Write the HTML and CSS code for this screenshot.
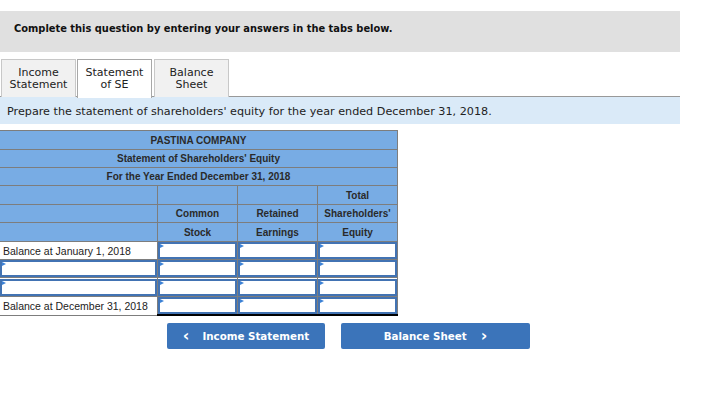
FILE: index.html
```html
<!DOCTYPE html>
<html>
<head>
<meta charset="utf-8">
<link rel="stylesheet" href="styles.css">
</head>
<body>
<div class="prompt">Complete this question by entering your answers in the tabs below.</div>
<div class="tabs">
  <div class="tab">Income<br>Statement</div>
  <div class="tab active">Statement<br>of SE</div>
  <div class="tab">Balance<br>Sheet</div>
</div>
<div class="instr">Prepare the statement of shareholders' equity for the year ended December 31, 2018.</div>
<table class="sheet">
  <colgroup><col class="c1"><col class="cn"><col class="cn"><col class="cn"></colgroup>
  <tr class="h19"><th colspan="4">PASTINA COMPANY</th></tr>
  <tr class="h18"><th colspan="4">Statement of Shareholders' Equity</th></tr>
  <tr class="h18"><th colspan="4">For the Year Ended December 31, 2018</th></tr>
  <tr class="h19"><th></th><th></th><th></th><th>Total</th></tr>
  <tr class="h18"><th></th><th>Common</th><th>Retained</th><th>Shareholders'</th></tr>
  <tr class="h19"><th></th><th>Stock</th><th>Earnings</th><th>Equity</th></tr>
  <tr class="h18">
    <td class="label">Balance at January 1, 2018</td>
    <td><div class="inp"></div></td><td><div class="inp"></div></td><td><div class="inp"></div></td>
  </tr>
  <tr class="h18">
    <td><div class="inp"></div></td>
    <td><div class="inp"></div></td><td><div class="inp"></div></td><td><div class="inp"></div></td>
  </tr>
  <tr class="h19">
    <td><div class="inp"></div></td>
    <td><div class="inp"></div></td><td><div class="inp"></div></td><td><div class="inp"></div></td>
  </tr>
  <tr class="h18 total">
    <td class="label">Balance at December 31, 2018</td>
    <td><div class="inp"></div></td><td><div class="inp"></div></td><td><div class="inp"></div></td>
  </tr>
</table>
<div class="nav">
  <button class="btn prev"><span class="chev">&lsaquo;</span>Income Statement</button>
  <button class="btn next">Balance Sheet<span class="chev">&rsaquo;</span></button>
</div>
</body>
</html>
```
FILE: styles.css
```css
body {
  margin: 0;
  width: 726px;
  height: 401px;
  background: #fff;
  font-family: "DejaVu Sans", Verdana, sans-serif;
  color: #111;
}
.prompt {
  margin-top: 11px;
  width: 680px;
  height: 41px;
  box-sizing: border-box;
  background: #e0e0e0;
  padding: 11px 0 0 14px;
  font-size: 9.9px;
  font-weight: bold;
  line-height: 14px;
}
.tabs {
  margin-top: 7px;
  width: 680px;
  display: flex;
  border-bottom: 1px solid #999;
  height: 38px;
  box-sizing: border-box;
}
.tab {
  width: 75px;
  height: 38px;
  box-sizing: border-box;
  border: 1px solid #c8c8c8;
  border-bottom: none;
  background: #f1f1f1;
  font-size: 11px;
  line-height: 12px;
  text-align: center;
  padding-top: 7px;
  margin-left: 1px;
  color: #222;
}
.tab.active {
  background: #fff;
  border-color: #a8a8a8;
  height: 39px;
  margin-left: 1px;
  margin-right: 1px;
}
.instr {
  width: 680px;
  height: 27px;
  box-sizing: border-box;
  background: #daeaf8;
  font-size: 11.2px;
  padding: 8px 0 0 7px;
  line-height: 14px;
  color: #222;
}
.sheet {
  margin-top: 6px;
  margin-left: -1px;
  border-collapse: collapse;
  font-family: "Liberation Sans", Arial, sans-serif;
  font-size: 10px;
  table-layout: fixed;
  width: 397px;
}
.c1 { width: 158px; }
.cn { width: 80px; }
.sheet th, .sheet td {
  border: 1px solid #7d7d7d;
  padding: 0;
}
.sheet th {
  background: #78ace4;
  font-weight: bold;
  color: #2a2a2a;
  text-align: center;
}
.h18 { height: 18px; }
.h19 { height: 19px; }
.sheet td { background: #fff; }
.label {
  padding-left: 3px !important;
  color: #222;
  font-size: 10.5px;
  white-space: nowrap;
}
.inp {
  position: relative;
  height: 17px;
  box-sizing: border-box;
  border: 2px solid #4273b3;
  background: #fff;
}
.inp::before {
  content: "";
  position: absolute;
  left: 0;
  top: 0;
  border-left: 4px solid #3d82d6;
  border-top: 2.5px solid transparent;
  border-bottom: 2.5px solid transparent;
}
.total td:nth-child(n+2) {
  border-top: 1px solid #000;
  border-bottom: 2px solid #000;
}
.nav {
  margin-top: 7px;
  margin-left: 167px;
  display: flex;
  gap: 16px;
}
.btn {
  height: 26px;
  border: none;
  border-radius: 2px;
  background: #3b74ba;
  color: #fff;
  font-family: "DejaVu Sans", Tahoma, sans-serif;
  font-weight: bold;
  font-size: 10.3px;
  padding: 0;
  display: flex;
  align-items: center;
  justify-content: center;
}
.btn.prev { width: 158px; }
.btn.next { width: 189px; }
.chev { font-size: 16px; font-weight: bold; line-height: 10px; }
.prev .chev { margin-right: 13px; }
.next .chev { margin-left: 14px; }
```
